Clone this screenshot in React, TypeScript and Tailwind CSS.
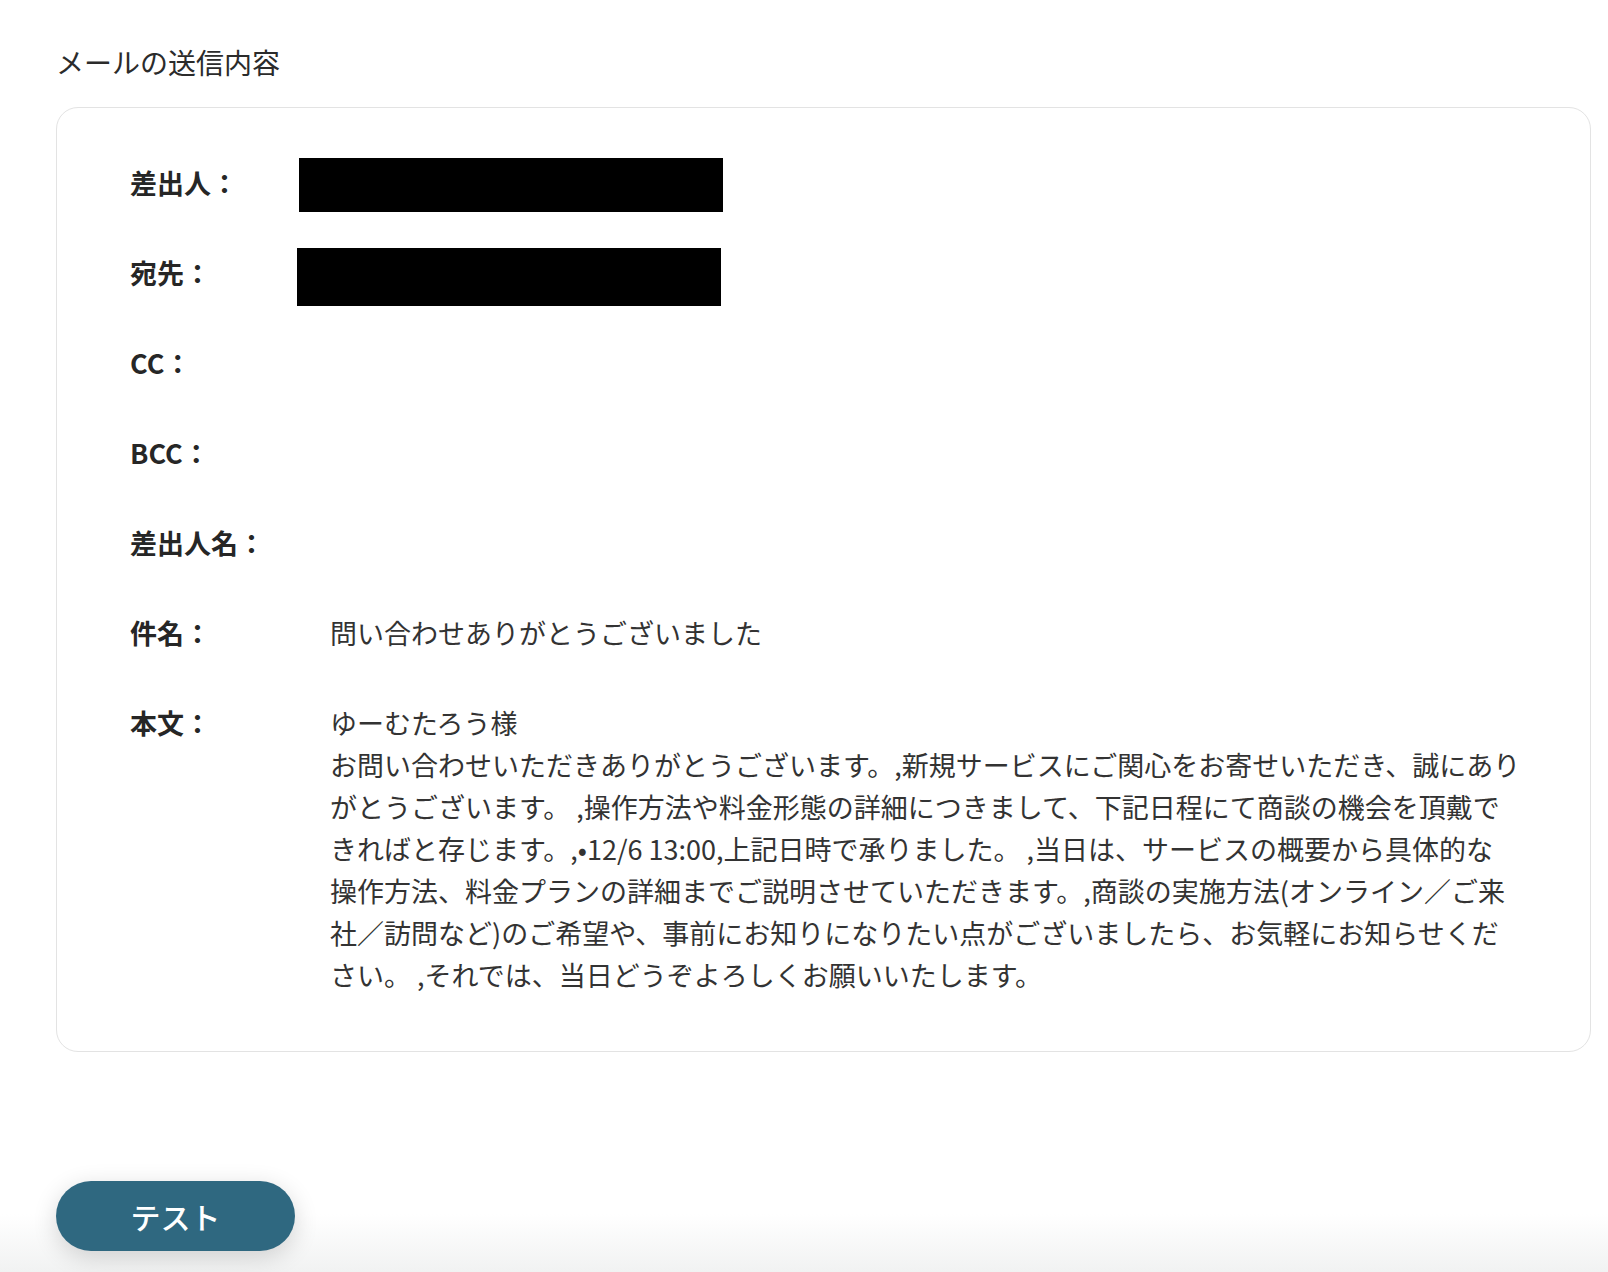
import React from 'react';

const font = "font-['Noto_Sans_CJK_JP','Noto_Sans',sans-serif]";

interface RowProps {
  label: string;
  children?: React.ReactNode;
}

function Row({ label, children }: RowProps) {
  return (
    <div className="flex items-start leading-[42px]">
      <div className="w-[200px] shrink-0 font-bold text-[#262626]">{label}</div>
      <div className="flex-1 min-w-0 text-[#333333]">{children}</div>
    </div>
  );
}

function Redacted({ className }: { className: string }) {
  return <div className={`bg-black w-[424px] ${className}`} />;
}

const bodyLines = [
  'ゆーむたろう様',
  'お問い合わせいただきありがとうございます。,新規サービスにご関心をお寄せいただき、誠にあり',
  'がとうございます。 ,操作方法や料金形態の詳細につきまして、下記日程にて商談の機会を頂戴で',
  'きればと存じます。,•12/6 13:00,上記日時で承りました。 ,当日は、サービスの概要から具体的な',
  '操作方法、料金プランの詳細までご説明させていただきます。,商談の実施方法(オンライン／ご来',
  '社／訪問など)のご希望や、事前にお知りになりたい点がございましたら、お気軽にお知らせくだ',
  'さい。 ,それでは、当日どうぞよろしくお願いいたします。',
];

export default function App() {
  return (
    <div
      className={`${font} min-h-[1272px] bg-[linear-gradient(to_bottom,#ffffff_1214px,#f1f2f2_1272px)] pl-[56px] pr-[17px] pt-[44px]`}
    >
      <h2 className="text-[28px] leading-[36px] text-[#2b2b2b]">メールの送信内容</h2>

      <section className="mt-[27px] rounded-[22px] border border-[#e3e3e3] bg-white pl-[73px] pr-[30px] pt-[54px] pb-[55px] text-[27px]">
        <div className="flex flex-col gap-[48px]">
          <Row label="差出人：">
            <Redacted className="-ml-[31px] -mt-[4px] -mb-[8px] h-[54px]" />
          </Row>
          <Row label="宛先：">
            <Redacted className="-ml-[33px] -mt-[4px] -mb-[12px] h-[58px]" />
          </Row>
          <Row label="CC：" />
          <Row label="BCC：" />
          <Row label="差出人名：" />
          <Row label="件名：">問い合わせありがとうございました</Row>
          <Row label="本文：">
            <p className="whitespace-nowrap">
              {bodyLines.map((line, i) => (
                <React.Fragment key={i}>
                  {line}
                  {i < bodyLines.length - 1 && <br />}
                </React.Fragment>
              ))}
            </p>
          </Row>
        </div>
      </section>

      <div className="mt-[129px] pb-[21px]">
        <button className="h-[70px] w-[239px] rounded-full bg-[#2f6880] text-[30px] font-medium text-white shadow-[0_6px_24px_rgba(0,0,0,0.16)]">
          テスト
        </button>
      </div>
    </div>
  );
}
